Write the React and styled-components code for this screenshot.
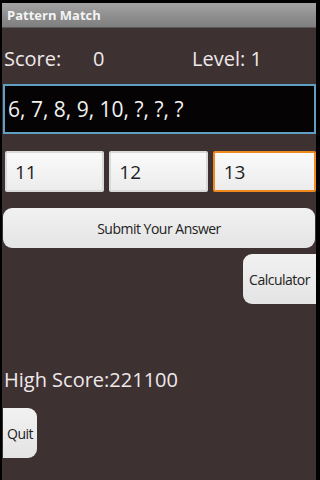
import React from 'react'
import styled, { createGlobalStyle } from 'styled-components'

const Global = createGlobalStyle`
  html, body {
    margin: 0;
    padding: 0;
    background: #000;
    height: 100%;
    overflow: hidden;
  }
  body {
    font-family: "Open Sans", "Noto Sans", "DejaVu Sans", sans-serif;
  }
`

const Screen = styled.div`
  margin: 3px 0 0 2px;
  width: 314px;
  height: 477px;
  background: #3e3132;
  display: flex;
  flex-direction: column;
`

const TitleBar = styled.div`
  height: 25px;
  background: linear-gradient(#a3a3a3, #8c8c8c 60%, #7f7f7f);
  border-bottom: 1px solid #5a5a5a;
  box-sizing: border-box;
  display: flex;
  align-items: center;
  padding-left: 5px;
  color: #f4f4f4;
  font-weight: 700;
  font-size: 13px;
`

const ScoreRow = styled.div`
  margin-top: 17px;
  display: grid;
  grid-template-columns: 89px 99px auto;
  padding-left: 2px;
  font-size: 20px;
  line-height: 28px;
  color: #efe9e9;
`

const Pattern = styled.div`
  margin: 11px 0 0 1px;
  height: 50px;
  box-sizing: border-box;
  background: #050304;
  border: 2px solid #5f9fc2;
  display: flex;
  align-items: center;
  padding-left: 3px;
  color: #f2f2f2;
  font-size: 21px;
`

const Answers = styled.div`
  margin-top: 17px;
  display: flex;
  gap: 5px;
  padding-left: 3px;
`

const Field = styled.div`
  height: 41px;
  width: ${p => p.w}px;
  box-sizing: border-box;
  background: linear-gradient(#fafafa, #ececec);
  border: 2px solid ${p => (p.focused ? '#f08a1e' : '#d9d9d9')};
  border-radius: 2px;
  display: flex;
  align-items: center;
  padding-left: ${p => (p.focused ? 9 : 8)}px;
  font-size: 19px;
  color: #1e1e1e;
`

const Button = styled.div`
  background: linear-gradient(#f1f1f1, #e4e4e4);
  color: #222;
  font-size: 14px;
  letter-spacing: -0.5px;
  display: flex;
  align-items: center;
  justify-content: center;
  box-sizing: border-box;
`

const Submit = styled(Button)`
  margin: 16px 1px 0 1px;
  height: 40px;
  border-radius: 9px;
`

const Calc = styled(Button)`
  align-self: flex-end;
  margin-top: 6px;
  width: 73px;
  height: 50px;
  border-radius: 9px 0 0 9px;
`

const High = styled.div`
  margin-top: 62px;
  padding-left: 2px;
  font-size: 20px;
  line-height: 28px;
  color: #efe9e9;
`

const Quit = styled(Button)`
  margin: 14px 0 0 1px;
  width: 34px;
  height: 50px;
  border-radius: 0 9px 9px 0;
`

export default function App() {
  return (
    <>
      <Global />
      <Screen>
        <TitleBar>Pattern Match</TitleBar>
        <ScoreRow>
          <span>Score:</span>
          <span>0</span>
          <span>Level: 1</span>
        </ScoreRow>
        <Pattern>6, 7, 8, 9, 10, ?, ?, ?</Pattern>
        <Answers>
          <Field w={100}>11</Field>
          <Field w={99}>12</Field>
          <Field w={104} focused>13</Field>
        </Answers>
        <Submit>Submit Your Answer</Submit>
        <Calc>Calculator</Calc>
        <High>High Score:221100</High>
        <Quit>Quit</Quit>
      </Screen>
    </>
  )
}
